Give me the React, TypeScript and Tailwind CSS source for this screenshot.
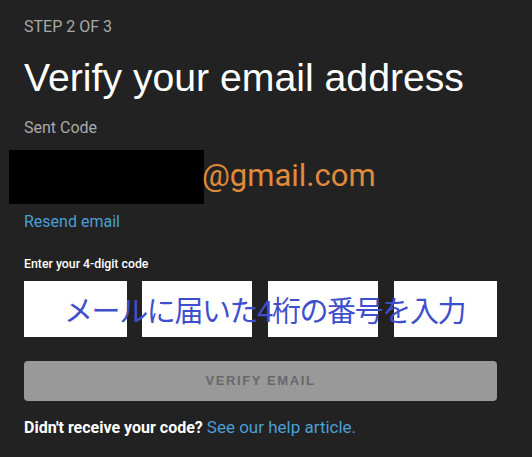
import React from "react";

const roboto = { fontFamily: "Roboto, 'Noto Sans', sans-serif" };

const CodeBox: React.FC<{ width: string; className?: string }> = ({ width, className }) => (
  <div className={`${width} h-[56px] bg-white ${className ?? ""}`} />
);

const App: React.FC = () => {
  return (
    <div className="w-[532px] h-[457px] bg-[#222222] overflow-hidden">
      <div className="px-6 pt-[17px]" style={roboto}>
        {/* Step */}
        <p className="text-base leading-5 text-[#a9a9a9]">STEP 2 OF 3</p>

        {/* Title */}
        <h1 className="mt-[17px] text-[39.2px] leading-[48px] text-white font-['Liberation_Sans',Arial,sans-serif]">
          Verify your email address
        </h1>

        {/* Sent to */}
        <p className="mt-4 text-base leading-5 text-[#a9a9a9]">Sent Code</p>
        <div className="mt-[12px] flex -ml-[15px]">
          <div className="w-[195px] h-[54px] bg-black" />
          <span className="-ml-[2px] mt-[8px] text-[31px] leading-9 text-[#e08a3b]">@gmail.com</span>
        </div>

        <a className="block mt-[8px] text-base leading-5 text-[#4a9fd6]">Resend email</a>

        {/* Code inputs */}
        <p className="mt-6 text-[12.3px] leading-4 font-medium text-white">Enter your 4-digit code</p>
        <div className="relative mt-[9px] flex">
          <CodeBox width="w-[103px]" />
          <CodeBox width="w-[110px]" className="ml-[15px]" />
          <CodeBox width="w-[110px]" className="ml-[16px]" />
          <CodeBox width="w-[103px]" className="ml-[16px]" />
          <span className="absolute left-[40px] top-[10px] text-[29px] leading-[36px] tracking-[-1.4px] text-[#3f4fcc] whitespace-nowrap font-['Noto_Sans_CJK_JP',sans-serif]">
            メールに届いた4桁の番号を入力
          </span>
        </div>

        {/* Button */}
        <button className="mt-6 w-[473px] h-10 rounded bg-[#999999] text-[13px] font-bold tracking-[1.6px] text-[#686868] font-['Liberation_Sans',Arial,sans-serif]">
          VERIFY EMAIL
        </button>

        <p className="mt-[16px] text-base leading-5 text-white">
          <span className="font-bold">Didn't receive your code?</span>{" "}
          <a className="text-[17px] text-[#4a9fd6]">See our help article.</a>
        </p>
      </div>
    </div>
  );
};

export default App;
